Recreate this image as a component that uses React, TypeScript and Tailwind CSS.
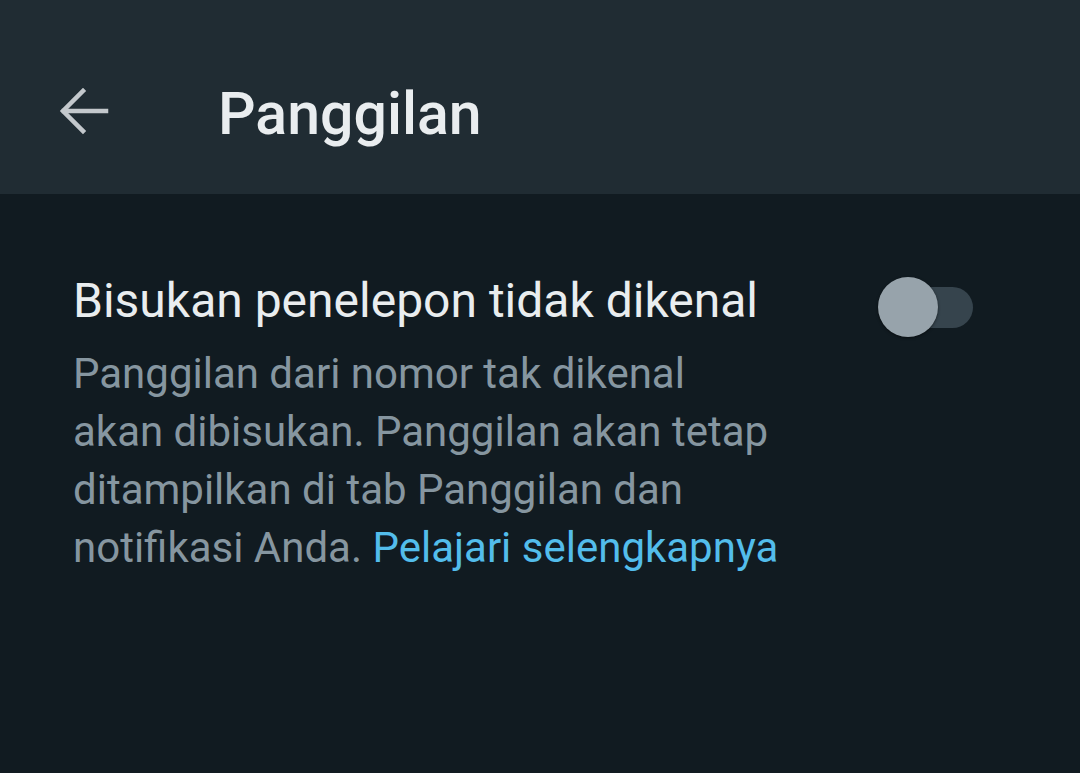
import React from "react";

export default function App() {
  return (
    <div className="w-[1080px] h-[773px] bg-[#111b21] flex flex-col" style={{ fontFamily: "Roboto, 'Noto Sans', sans-serif" }}>
      <div className="h-[194px] bg-[#202c33] flex items-center pt-[32px] shrink-0">
        <div className="w-[218px] pl-[59px] flex items-center -mt-[5px]">
          <svg width="50" height="50" viewBox="0 0 50 50" fill="none" stroke="#c3c8cc" strokeWidth="4.5" strokeLinecap="square" strokeLinejoin="miter">
            <path d="M47 25H5" />
            <path d="M24 5L4 25L24 45" />
          </svg>
        </div>
        <div className="text-[#e9edef] text-[59px] font-medium leading-none">Panggilan</div>
      </div>
      <div className="flex items-start pl-[73px] pt-[79px]">
        <div className="w-[740px]">
          <div className="text-[#e9edef] text-[48px] leading-[56px]">Bisukan penelepon tidak dikenal</div>
          <div className="text-[#8696a0] text-[42px] leading-[58px] mt-[16px]">
            Panggilan dari nomor tak dikenal
            <br />
            akan dibisukan. Panggilan akan tetap
            <br />
            ditampilkan di tab Panggilan dan
            <br />
            notifikasi Anda. <span className="text-[#53bdeb]">Pelajari selengkapnya</span>
          </div>
        </div>
        <div className="relative ml-[67px] mt-[3px] w-[95px] h-[62px] flex items-center">
          <div className="ml-[2px] w-[91px] h-[41px] rounded-full bg-[#36444d]" />
          <div className="absolute left-[-2px] top-[1px] w-[60px] h-[60px] rounded-full bg-[#97a3ab] shadow-[0_1px_3px_rgba(0,0,0,0.5)]" />
        </div>
      </div>
    </div>
  );
}
